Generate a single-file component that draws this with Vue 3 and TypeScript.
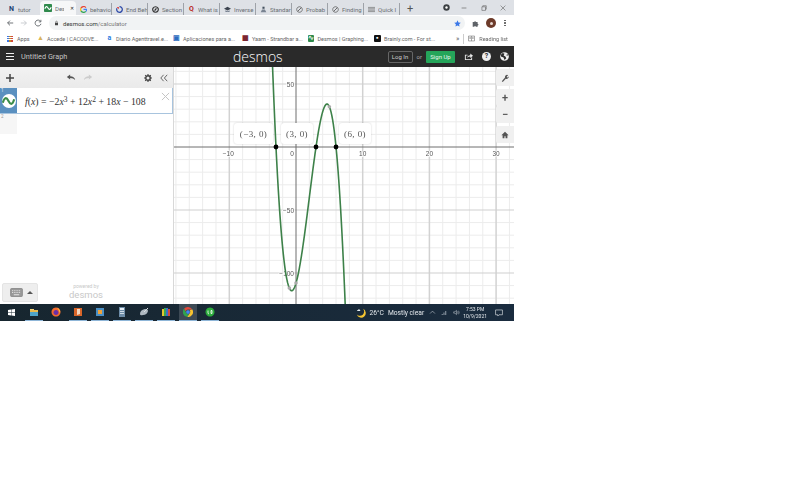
<script setup lang="ts">
type Shape = { d: string; fill?: string; stroke?: string; sw?: number }

const tabs: { title: string; active?: boolean; glyph?: string; color?: string; shapes?: Shape[] }[] = [
  { title: 'tutor', glyph: 'N', color: '#1d3f72' },
  { title: 'Des', active: true, shapes: [{ d: 'M1 0h8q1 0 1 1v8q0 1-1 1H1q-1 0-1-1V1q0-1 1-1z', fill: '#2f8a4c' }, { d: 'M1 6q2-5 4-1t4-1', stroke: '#fff', sw: 1.4 }] },
  { title: 'behavio', shapes: [
    { d: 'M8.5 2.2A4.4 4.4 0 0 0 1.4 3', stroke: '#e94335', sw: 1.7 },
    { d: 'M1.4 3a4.4 4.4 0 0 0 0 4', stroke: '#fbbc05', sw: 1.7 },
    { d: 'M1.4 7a4.4 4.4 0 0 0 7 .8', stroke: '#34a853', sw: 1.7 },
    { d: 'M8.4 7.8Q9.6 6.5 9.4 4.8H5', stroke: '#4285f4', sw: 1.7 }
  ] },
  { title: 'End Beh', shapes: [{ d: 'M5 1a4 4 0 1 1-3.6 2.3', stroke: '#2e4aa8', sw: 1.8 }, { d: 'M1 1.5l3 0 0 3z', fill: '#d33' }] },
  { title: 'Section', shapes: [{ d: 'M5 1a4 4 0 1 0 .01 0z', stroke: '#333', sw: 1.6 }, { d: 'M3 7l1.2-3L7 3 5.8 6z', fill: '#333' }] },
  { title: 'What is', glyph: 'Q', color: '#b92b27' },
  { title: 'Inverse', shapes: [{ d: 'M0 4l5-3 5 3-5 2.5z', fill: '#3d4450' }, { d: 'M2 6v2.5h6V6l-3 1.5z', fill: '#7a8492' }] },
  { title: 'Standar', shapes: [{ d: 'M3.5 1h3v3h-3z', fill: '#44505e' }, { d: 'M1 9l2-4h4l2 4z', fill: '#7a8492' }] },
  { title: 'Probab', shapes: [{ d: 'M5 1a4 4 0 1 0 .01 0z', stroke: '#555', sw: 1 }, { d: 'M2.5 7.5l5-5', stroke: '#555', sw: 1.2 }] },
  { title: 'Finding', shapes: [{ d: 'M5 1a4 4 0 1 0 .01 0z', stroke: '#555', sw: 1 }, { d: 'M2.5 7.5l5-5', stroke: '#555', sw: 1.2 }] },
  { title: 'Quick I', shapes: [{ d: 'M0 2h10M0 4h10M0 6h10M0 8h10', stroke: '#666', sw: 0.9 }] }
]

const bookmarks: { title: string; width: number; glyph?: string; color: string; bg?: string }[] = [
  { title: 'Accede | CACOOVE...', width: 69, glyph: '▲', color: '#d9b35a' },
  { title: 'Diario Agenttravel.e...', width: 67, glyph: 'a', color: '#2a7de1' },
  { title: 'Aplicaciones para a...', width: 69, glyph: '▣', color: '#2c6bc0' },
  { title: 'Yaam - Strandbar a...', width: 65.5, glyph: '▦', color: '#7b2530' },
  { title: 'Desmos | Graphing...', width: 66.5, glyph: '∿', color: '#fff', bg: '#2f8a4c' },
  { title: 'Brainly.com - For st...', width: 67, glyph: '▪', color: '#fff', bg: '#111' }
]

// graph scale read off the tick labels of the reference
const W = 340
const H = 237
const ox = 122
const oy = 80
const sx = 6.67
const sy = 1.26
const px = (x: number) => ox + x * sx
const py = (y: number) => oy - y * sy
const f = (x: number) => -2 * x ** 3 + 12 * x ** 2 + 18 * x - 108

const range = (a: number, b: number, step: number) => {
  const out: number[] = []
  for (let v = a; v <= b; v += step) out.push(v)
  return out
}

const minorX = range(-18, 32, 2).filter((v) => v % 10 !== 0).map(px)
const minorY = range(-130, 60, 10).filter((v) => v % 50 !== 0).map(py)
const majorX = [-10, 10, 20, 30].map(px)
const majorY = [-100, -50, 50].map(py)

const curve = range(-4, 7.6, 0.05)
  .map((x, i) => `${i ? 'L' : 'M'}${px(x).toFixed(2)} ${py(f(x)).toFixed(2)}`)
  .join('')

const xTicks = [-10, 10, 20, 30].map((v) => ({ v, x: px(v) }))
const yTicks = [50, -50, -100].map((v) => ({ v, y: py(v) }))
const roots = [-3, 3, 6].map(px)
const greys = [
  { x: px(5), y: py(f(5)) },
  { x: px(-1), y: py(f(-1)) },
  { x: px(0), y: py(f(0)) }
]
const pointLabels = [
  { text: '(−3, 0)', cls: 'p1' },
  { text: '(3, 0)', cls: 'p2' },
  { text: '(6, 0)', cls: 'p3' }
]

const taskIcons: { cls?: string; shapes: Shape[] }[] = [
  { shapes: [{ d: 'M1 3h8v2H1z', fill: '#e8b84b' }, { d: 'M1 5h8v4H1z', fill: '#4fa3c7' }, { d: 'M1 2h4v1H1z', fill: '#f3d27a' }] },
  { cls: 'bare', shapes: [{ d: 'M5 .5a4.5 4.5 0 1 0 .01 0z', fill: '#f26a2e' }, { d: 'M5 3a2.5 2.5 0 1 0 .01 0z', fill: '#6b2fa8' }, { d: 'M6 .5Q10 3 9 6 8 3 6 .5z', fill: '#ffc93c' }] },
  { shapes: [{ d: 'M1 1h8v8H1z', fill: '#d9662a' }, { d: 'M4 2h3v5l-3 1z', fill: '#f5d7c0' }] },
  { shapes: [{ d: 'M1 1h8v8H1z', fill: '#4b8fc4' }, { d: 'M3 3h4v4H3z', fill: '#f0a23a' }] },
  { shapes: [{ d: 'M2 0h6v10H2z', fill: '#6e8da8' }, { d: 'M3 1h4v2H3z', fill: '#e6eef5' }, { d: 'M3 4h4v1H3zM3 6h4v1H3z', fill: '#cfdbe6' }] },
  { shapes: [{ d: 'M1 7q0-4 5-5 3 0 3 2-1 4-5 4-3 1-3-1z', fill: '#aeb8c0' }, { d: 'M5 5L9 1', stroke: '#d8dde0', sw: 1 }] },
  { shapes: [{ d: 'M1 2h2v7H1z', fill: '#e6c42e' }, { d: 'M3 1h2v8H3z', fill: '#3aa655' }, { d: 'M5 1h2v8H5z', fill: '#3b6fc9' }, { d: 'M7 2h2v7H7z', fill: '#d0483f' }] },
  { cls: 'current', shapes: [
    { d: 'M5 0a5 5 0 0 1 4.4 2.6H5A2.5 2.5 0 0 0 2.6 4.2L1 1.8A5 5 0 0 1 5 0z', fill: '#e2483b' },
    { d: 'M1 1.8l2.2 3.9A2.5 2.5 0 0 0 6 7.4L4.4 10A5 5 0 0 1 1 1.8z', fill: '#31a24f' },
    { d: 'M9.4 2.6A5 5 0 0 1 4.4 10L6.7 6.2A2.5 2.5 0 0 0 6.6 3.1z', fill: '#f7c32f' },
    { d: 'M5 3.2a1.8 1.8 0 1 0 .01 0z', fill: '#4285f4' }
  ] },
  { shapes: [{ d: 'M5 .5a4.5 4.5 0 1 0 .01 0z', fill: '#2bab3b' }, { d: 'M3 3.5v2.4q0 1 1 1M6 3.5h1v3H6z', stroke: '#fff', sw: 0.8 }] }
]
</script>

<template>
  <div class="screen">
    <div class="tabstrip">
      <div v-for="tab in tabs" :key="tab.title" class="tab" :class="{ active: tab.active }">
        <span v-if="tab.glyph" class="tab-glyph" :style="{ color: tab.color }">{{ tab.glyph }}</span>
        <svg v-else class="favicon" viewBox="0 0 10 10">
          <path v-for="(s, i) in tab.shapes" :key="i" :d="s.d" :fill="s.fill || 'none'" :stroke="s.stroke" :stroke-width="s.sw" />
        </svg>
        <span class="tab-title">{{ tab.title }}</span>
        <span v-if="tab.active" class="tab-close">✕</span>
      </div>
      <span class="new-tab">+</span>
      <div class="window-controls">
        <svg class="record" viewBox="0 0 10 10">
          <circle cx="5" cy="5" r="4.6" fill="#3c4043" />
          <circle cx="5" cy="5" r="1.7" fill="#fff" />
        </svg>
        <svg class="win-btn" viewBox="0 0 10 10"><path d="M1 5h8" stroke="#555" /></svg>
        <svg class="win-btn" viewBox="0 0 10 10"><path d="M1.5 3h6v6h-6zM3 3V1.2h5.8V7H7.5" fill="none" stroke="#555" stroke-width=".9" /></svg>
        <svg class="win-btn" viewBox="0 0 10 10"><path d="M1 1l8 8M9 1l-8 8" stroke="#555" stroke-width=".9" /></svg>
      </div>
    </div>

    <div class="toolbar">
      <svg class="nav" viewBox="0 0 10 10"><path d="M9 5H2M5 2L2 5l3 3" fill="none" stroke="#5f6368" stroke-width="1.1" /></svg>
      <svg class="nav" viewBox="0 0 10 10"><path d="M1 5h7M5 2l3 3-3 3" fill="none" stroke="#c4c7cc" stroke-width="1.1" /></svg>
      <svg class="nav" viewBox="0 0 10 10"><path d="M8.2 3A3.7 3.7 0 1 0 8.7 6M8.6 1v2.6H6" fill="none" stroke="#5f6368" stroke-width="1.1" /></svg>
      <div class="omnibox">
        <svg class="lock" viewBox="0 0 10 10"><path d="M2 4.5h6V9.5H2z" fill="#444" /><path d="M3.3 4.5V3a1.7 1.7 0 0 1 3.4 0v1.5" fill="none" stroke="#444" /></svg>
        <span class="url"><b>desmos.com</b>/calculator</span>
        <svg class="star" viewBox="0 0 10 10"><path d="M5 .5l1.4 3 3.3.4-2.4 2.2.6 3.3L5 7.8 2.100 9.4l.6-3.300L.3 3.900l3.300-.4z" fill="#3b78e7" /></svg>
      </div>
      <svg class="puzzle" viewBox="0 0 10 10"><path d="M1 3h2.200a1.200 1.200 0 0 1 2.400 0H8v2.400a1.200 1.200 0 0 1 0 2.400V9.500H5.500a1.200 1.200 0 0 0-2.300 0H1z" fill="#5f6368" /></svg>
      <span class="avatar"><i></i></span>
      <span class="dots"><i></i><i></i><i></i></span>
    </div>

    <div class="bookmarks">
      <span class="apps-grid"><i v-for="n in 9" :key="n"></i></span>
      <span class="bm-apps">Apps</span>
      <div v-for="b in bookmarks" :key="b.title" class="bookmark" :style="{ width: b.width + 'px' }">
        <span class="bm-icon" :style="{ color: b.color, background: b.bg || 'transparent' }">{{ b.glyph }}</span>
        <span class="bm-title">{{ b.title }}</span>
      </div>
      <span class="bm-more">»</span>
      <span class="bm-sep"></span>
      <svg class="bm-read" viewBox="0 0 10 10"><path d="M.7 1.500h8.600v7H.7zM5 1.500v7M2 3.500h2M2 5h2M6 3.500h2M6 5h2" fill="none" stroke="#666" stroke-width=".8" /></svg>
      <span class="bm-reading">Reading list</span>
    </div>

    <header class="dcg-header">
      <div class="head-left">
        <span class="burger"><i></i><i></i><i></i></span>
        <span class="graph-title">Untitled Graph</span>
      </div>
      <div class="logo">desmos</div>
      <div class="head-right">
        <span class="login">Log In</span>
        <span class="or">or</span>
        <span class="signup">Sign Up</span>
        <svg class="head-icon share" viewBox="0 0 10 10"><path d="M1 3h3v1H2v4h6V6h1v3H1z" fill="#eee" /><path d="M3.500 6.500Q4 3.500 7 3.500V1.800L10 4.300 7 6.800V5Q5 5 3.500 6.500z" fill="#eee" /></svg>
        <span class="head-icon help">?</span>
        <svg class="head-icon globe" viewBox="0 0 10 10"><circle cx="5" cy="5" r="4.800" fill="#eee" /><path d="M3 1l2 1-1 2 2 1 1 2-2 2-1-3-3-1 0-2zM8 2l1 2-2 0z" fill="#2a2a2a" /></svg>
      </div>
    </header>

    <main class="calc">
      <aside class="panel">
        <div class="panel-bar">
          <svg class="add" viewBox="0 0 8 8"><path d="M4 0v8M0 4h8" stroke="#444" stroke-width="1.500" /></svg>
          <div class="history">
            <svg viewBox="0 0 12 8"><path d="M1 3.500L5 .5v2Q10 2.500 11 7 9 4.500 5 4.500v2z" fill="#555" /></svg>
            <svg viewBox="0 0 12 8"><path d="M11 3.500L7 .5v2Q2 2.500 1 7 3 4.500 7 4.500v2z" fill="#ccc" /></svg>
          </div>
          <svg class="gear" viewBox="0 0 10 10"><circle cx="5" cy="5" r="2.800" fill="none" stroke="#444" stroke-width="1.800" /><path d="M5 0v2M5 8v2M0 5h2M8 5h2M1.500 1.500l1.400 1.400M7.100 7.100l1.400 1.400M8.500 1.500L7.100 2.900M2.900 7.100L1.500 8.500" stroke="#444" stroke-width="1.400" /></svg>
          <svg class="collapse" viewBox="0 0 10 10"><path d="M4.500 1L1 5l3.500 4M9 1L5.500 5 9 9" fill="none" stroke="#555" stroke-width="1.100" /></svg>
        </div>
        <div class="expr">
          <div class="expr-tab">
            <span class="expr-num">1</span>
            <span class="swatch">
              <svg viewBox="0 0 16 12"><path d="M1 8Q4 -2 8 6T15 4" fill="none" stroke="#3b8c4a" stroke-width="2.600" /></svg>
            </span>
          </div>
          <div class="formula">
            <i>f</i>(<i>x</i>) = −2<i>x</i><sup>3</sup> + 12<i>x</i><sup>2</sup> + 18<i>x</i> − 108
          </div>
          <svg class="expr-x" viewBox="0 0 10 10"><path d="M1 1l8 8M9 1l-8 8" stroke="#c4c4c4" stroke-width="1.100" /></svg>
        </div>
        <div class="expr-next"><span>2</span></div>
        <div class="panel-foot">
          <div class="kbd">
            <svg viewBox="0 0 14 10"><rect x=".5" y=".5" width="13" height="9" rx="1" fill="#999" stroke="#888" /><path d="M2 3h10M2 5h10" stroke="#eee" stroke-dasharray="1 1" /><path d="M4 7.500h6" stroke="#eee" /></svg>
            <span class="caret"></span>
          </div>
          <div class="powered">
            <small>powered by</small>
            <span>desmos</span>
          </div>
        </div>
      </aside>

      <section class="graph">
        <svg class="plot" :viewBox="`0 0 ${W} ${H}`">
          <line v-for="x in minorX" :key="'mx' + x" :x1="x" :x2="x" y1="0" :y2="H" class="minor" />
          <line v-for="y in minorY" :key="'my' + y" x1="0" :x2="W" :y1="y" :y2="y" class="minor" />
          <line v-for="x in majorX" :key="'Mx' + x" :x1="x" :x2="x" y1="0" :y2="H" class="major" />
          <line v-for="y in majorY" :key="'My' + y" x1="0" :x2="W" :y1="y" :y2="y" class="major-h" />
          <line :x1="ox" :x2="ox" y1="0" :y2="H" class="axis" />
          <line x1="0" :x2="W" :y1="oy" :y2="oy" class="axis" />
          <text v-for="t in xTicks" :key="t.v" :x="t.x - (t.v < 0 ? 1 : 0)" :y="oy + 8.500" text-anchor="middle" class="tick">{{ String(t.v).replace('-', '−') }}</text>
          <text :x="ox - 4" :y="oy + 8.500" text-anchor="middle" class="tick">0</text>
          <text v-for="t in yTicks" :key="t.v" :x="ox - 2" :y="t.y + 2.500" text-anchor="end" class="tick">{{ String(t.v).replace('-', '−') }}</text>
          <path :d="curve" class="curve" />
          <circle v-for="g in greys" :key="g.x" :cx="g.x" :cy="g.y" r="1.800" class="grey" />
          <circle v-for="x in roots" :key="x" :cx="x" :cy="oy" r="2.400" fill="#000" />
        </svg>
        <div v-for="p in pointLabels" :key="p.text" class="point-label" :class="p.cls">{{ p.text }}</div>
        <div class="side-btns">
          <div class="side-btn wrench">
            <svg viewBox="0 0 10 10"><path d="M1 9l4-4.500Q4.500 2 6.500 1.200 8 .8 9 1.500L7.200 3 7.500 4l1 .3L9.800 2.800Q10 5 8 6 6.800 6.300 6 5.800L2.200 10z" fill="#555" /></svg>
          </div>
          <div class="zoom-group">
            <div class="side-btn">+</div>
            <div class="side-btn">−</div>
          </div>
          <div class="side-btn">
            <svg viewBox="0 0 10 10"><path d="M5 1L.5 5.200h1.500V9h2.300V6.500h1.400V9H8V5.200h1.500z" fill="#555" /></svg>
          </div>
        </div>
      </section>
    </main>

    <footer class="taskbar">
      <svg class="start" viewBox="0 0 10 10"><path d="M0 1.300L4.400.7v3.900H0zM5 .6L10 0v4.600H5zM0 5.200h4.400v4L0 8.700zM5 5.200h5V10l-5-.6z" fill="#fff" /></svg>
      <div class="task-icons">
        <div v-for="(t, i) in taskIcons" :key="i" class="task-icon" :class="t.cls">
          <svg viewBox="0 0 10 10"><path v-for="(s, j) in t.shapes" :key="j" :d="s.d" :fill="s.fill || 'none'" :stroke="s.stroke" :stroke-width="s.sw" /></svg>
        </div>
      </div>
      <div class="tray">
        <svg class="moon" viewBox="0 0 10 10"><path d="M7 .8A4.600 4.600 0 1 1 .8 6.500 4 4 0 0 0 7 .8z" fill="#f5c431" /><path d="M1 3q0-1 1-1 .5-1 1.500-.5Q5 2 4 3z" fill="#e8eef2" /></svg>
        <span class="temp">26°C</span>
        <span class="weather">Mostly clear</span>
        <svg class="tray-ico" viewBox="0 0 10 10"><path d="M1.500 6.500L5 3l3.500 3.500" fill="none" stroke="#cfd6dc" stroke-width=".8" /></svg>
        <svg class="tray-ico" viewBox="0 0 10 10"><path d="M1 8.500h1.500V7H1zM3.500 8.500H5V5H3.500zM6 8.500h1.500V3H6z" fill="#8d99a5" /></svg>
        <svg class="tray-ico" viewBox="0 0 10 10"><path d="M1 4h1.800L5 2v6L2.800 6H1zM6.500 3.500q1 1.500 0 3M8 2.500q1.500 2.500 0 5" fill="none" stroke="#cfd6dc" stroke-width=".7" /></svg>
        <div class="clock"><span>7:53 PM</span><span>10/9/2021</span></div>
        <svg class="notify" viewBox="0 0 10 10"><path d="M.7 1.200h8.600v6H5L3.500 8.800V7.200H.7z" fill="none" stroke="#dfe4e8" stroke-width=".8" /></svg>
      </div>
    </footer>
  </div>
</template>

<style>
html,
body {
  margin: 0;
  background: #fff;
}
</style>

<style scoped>
.screen {
  width: 514px;
  height: 321px;
  display: flex;
  flex-direction: column;
  overflow: hidden;
  font-family: Roboto, "Liberation Sans", sans-serif;
  filter: blur(0.5px);
}

/* chrome */
.tabstrip {
  height: 15px;
  flex: none;
  display: flex;
  align-items: flex-end;
  padding-left: 4px;
  background: #dee1e6;
}

.tab {
  width: 36px;
  height: 12px;
  box-sizing: border-box;
  padding-left: 4px;
  display: flex;
  align-items: center;
  gap: 3px;
  overflow: hidden;
  white-space: nowrap;
  border-right: 1px solid #9ea2a8;
  font-size: 6px;
  color: #6a6e73;
}

.tab:first-child,
.tab.active {
  border-right-color: transparent;
}

.tab.active {
  background: #f6f7f8;
  border-radius: 4px 4px 0 0;
  height: 14px;
}

.favicon {
  width: 7px;
  height: 7px;
  flex: none;
}

.tab.active .favicon {
  width: 8px;
  height: 8px;
}

.tab-glyph {
  width: 7px;
  flex: none;
  font-size: 7px;
  font-weight: 700;
  text-align: center;
}

.tab-title {
  overflow: hidden;
  flex: 1;
}

.tab.active .tab-title {
  flex: none;
  width: 9px;
}

.tab-close {
  margin-left: 3px;
  font-size: 5px;
  color: #222;
}

.new-tab {
  margin-left: 5px;
  width: 10px;
  height: 12px;
  text-align: center;
  font-size: 11px;
  line-height: 12px;
  color: #555;
}

.window-controls {
  margin-left: auto;
  height: 15px;
  display: flex;
  align-items: center;
}

.record {
  width: 7px;
  height: 7px;
  margin-right: 11px;
}

.win-btn {
  width: 6px;
  height: 6px;
  margin-right: 13.500px;
}

.win-btn:last-child {
  margin-right: 8px;
}

.toolbar {
  height: 16px;
  flex: none;
  display: flex;
  align-items: center;
  padding-left: 6px;
  background: #fff;
}

.nav {
  width: 8px;
  height: 8px;
  margin-right: 6px;
}

.omnibox {
  width: 416px;
  height: 14px;
  margin-left: 1px;
  box-sizing: border-box;
  padding: 0 4px 0 5px;
  display: flex;
  align-items: center;
  border-radius: 7px;
  background: #f1f3f4;
}

.lock {
  width: 5px;
  height: 6px;
}

.url {
  margin-left: 4px;
  font-size: 6px;
  color: #777;
}

.url b {
  font-weight: 400;
  color: #333;
}

.star {
  margin-left: auto;
  width: 7px;
  height: 7px;
}

.puzzle {
  width: 7px;
  height: 7px;
  margin-left: 7px;
}

.avatar {
  width: 10px;
  height: 10px;
  margin-left: 7px;
  border-radius: 50%;
  background: #6d3b2a;
  display: flex;
  align-items: center;
  justify-content: center;
}

.avatar i {
  width: 3px;
  height: 3px;
  border-radius: 50%;
  background: #e8d9d2;
}

.dots {
  margin-left: 8px;
  display: flex;
  flex-direction: column;
  gap: 1px;
}

.dots i {
  width: 1.500px;
  height: 1.500px;
  border-radius: 50%;
  background: #555;
}

.bookmarks {
  height: 15px;
  flex: none;
  display: flex;
  align-items: center;
  padding-left: 7px;
  font-size: 5.500px;
  color: #666;
  white-space: nowrap;
  background: #fff;
}

.apps-grid {
  width: 6px;
  height: 6px;
  display: grid;
  grid-template-columns: repeat(3, 1.500px);
  gap: 0.700px;
}

.apps-grid i {
  background: #c58a28;
}

.apps-grid i:nth-child(3n + 1) {
  background: #3b78e7;
}

.apps-grid i:nth-child(3n) {
  background: #d34a3c;
}

.bm-apps {
  margin-left: 4px;
  width: 20px;
}

.bookmark {
  display: flex;
  align-items: center;
  gap: 3.500px;
  flex: none;
  overflow: hidden;
}

.bm-icon {
  width: 6.500px;
  height: 7px;
  flex: none;
  border-radius: 1px;
  font-size: 7px;
  line-height: 7px;
  text-align: center;
  font-weight: 700;
}

.bm-more {
  margin-left: 15px;
  font-size: 7px;
}

.bm-sep {
  width: 1px;
  height: 10px;
  margin-left: 4px;
  background: #ccc;
}

.bm-read {
  width: 7px;
  height: 7px;
  margin-left: 4px;
}

.bm-reading {
  margin-left: 4px;
}

/* desmos header */
.dcg-header {
  height: 21px;
  flex: none;
  position: relative;
  display: flex;
  align-items: center;
  justify-content: space-between;
  background: #2a2a2a;
  color: #ddd;
}

.head-left {
  display: flex;
  align-items: center;
  padding-left: 6px;
}

.burger {
  width: 8px;
  display: flex;
  flex-direction: column;
  gap: 1.500px;
}

.burger i {
  height: 1.300px;
  background: #eee;
}

.graph-title {
  margin-left: 7px;
  font-size: 7.300px;
  color: #c4c4c4;
}

.logo {
  position: absolute;
  left: 233px;
  top: 0;
  font-family: "Open Sans", sans-serif;
  font-size: 14px;
  line-height: 21px;
  font-weight: 300;
  color: #fff;
}

.head-right {
  display: flex;
  align-items: center;
  padding-right: 5px;
}

.login {
  width: 25px;
  height: 12px;
  box-sizing: border-box;
  border: 1px solid #666;
  border-radius: 2px;
  font-size: 6px;
  line-height: 10px;
  text-align: center;
  color: #ccc;
}

.or {
  margin: 0 4px;
  font-size: 6px;
  color: #aaa;
}

.signup {
  width: 29px;
  height: 12px;
  border-radius: 1px;
  background: #25a55a;
  font-size: 6px;
  line-height: 12px;
  text-align: center;
  color: #e8f7ee;
}

.head-icon {
  width: 9px;
  height: 9px;
}

.share {
  margin-left: 9px;
}

.help {
  margin-left: 9px;
  border-radius: 50%;
  background: #eee;
  color: #2a2a2a;
  font-size: 7px;
  font-weight: 700;
  line-height: 9px;
  text-align: center;
}

.globe {
  margin-left: 9px;
}

/* calculator */
.calc {
  flex: 1;
  min-height: 0;
  display: flex;
}

.panel {
  width: 174px;
  flex: none;
  box-sizing: border-box;
  display: flex;
  flex-direction: column;
  border-right: 1px solid #d8d8d8;
  background: #fff;
  z-index: 1;
}

.panel-bar {
  height: 21px;
  flex: none;
  display: flex;
  align-items: center;
  background: linear-gradient(#f2f2f2, #eaeaea);
}

.add {
  width: 8px;
  height: 8px;
  margin-left: 6px;
}

.history {
  margin-left: 52px;
  display: flex;
  gap: 7px;
}

.history svg {
  width: 10px;
  height: 7px;
}

.gear {
  width: 8px;
  height: 8px;
  margin-left: 51px;
}

.collapse {
  width: 8px;
  height: 8px;
  margin-left: 8px;
}

.expr {
  height: 26px;
  flex: none;
  display: flex;
  position: relative;
  box-sizing: border-box;
  border-bottom: 1px solid #a8c4de;
  border-right: 1px solid #a8c4de;
}

.expr-tab {
  width: 17px;
  flex: none;
  position: relative;
  background: #5a90c0;
  display: flex;
  align-items: center;
  justify-content: center;
}

.expr-num {
  position: absolute;
  left: 1px;
  top: 0;
  font-size: 4.500px;
  line-height: 6px;
  color: #e8f0f8;
}

.swatch {
  width: 14px;
  height: 14px;
  border-radius: 50%;
  background: #fff;
  display: flex;
  align-items: center;
  justify-content: center;
}

.swatch svg {
  width: 13px;
  height: 10px;
}

.formula {
  margin: 2px 0 0 8px;
  align-self: center;
  font-family: "Liberation Serif", serif;
  font-size: 9.800px;
  color: #333;
  white-space: nowrap;
}

.formula sup {
  font-size: 7.500px;
  line-height: 0;
  vertical-align: 3.500px;
}

.expr-x {
  position: absolute;
  right: 2px;
  top: 4px;
  width: 9px;
  height: 9px;
}

.expr-next {
  width: 17px;
  height: 20px;
  flex: none;
  background: #f6f6f6;
  font-size: 4.500px;
  color: #999;
  padding-left: 1px;
  box-sizing: border-box;
}

.panel-foot {
  margin-top: auto;
  height: 21px;
  display: flex;
  align-items: flex-start;
  padding: 0 0 2px 2px;
  box-sizing: border-box;
}

.kbd {
  width: 36px;
  height: 19px;
  box-sizing: border-box;
  padding-left: 7px;
  display: flex;
  align-items: center;
  gap: 4px;
  border: 1px solid #e4e4e4;
  border-radius: 2px;
  background: #eee;
}

.kbd svg {
  width: 13px;
  height: 9px;
}

.caret {
  border-left: 3px solid transparent;
  border-right: 3px solid transparent;
  border-bottom: 3px solid #555;
}

.powered {
  margin-left: 31px;
  display: flex;
  flex-direction: column;
  align-items: center;
  color: #c8c8c8;
}

.powered small {
  font-size: 5px;
  line-height: 6px;
}

.powered span {
  font-size: 9.500px;
  line-height: 11px;
}

/* graph */
.graph {
  flex: 1;
  min-width: 0;
  position: relative;
  background: #fff;
}

.plot {
  display: block;
  width: 100%;
  height: 100%;
}

.minor {
  stroke: #ececec;
  stroke-width: 1;
}

.major {
  stroke: #d2d2d2;
  stroke-width: 1.500;
}

.major-h {
  stroke: #cfcfcf;
  stroke-width: 1;
}

.axis {
  stroke: #6f6f6f;
  stroke-width: 1;
}

.tick {
  font-family: "Liberation Sans", sans-serif;
  font-size: 6.500px;
  fill: #555;
  paint-order: stroke;
  stroke: #fff;
  stroke-width: 1.500px;
}

.curve {
  fill: none;
  stroke: #3d8149;
  stroke-width: 1.600;
}

.grey {
  fill: #aaa;
}

.point-label {
  position: absolute;
  top: 56px;
  height: 21px;
  box-sizing: border-box;
  display: flex;
  align-items: center;
  justify-content: center;
  border-radius: 3px;
  background: #fff;
  box-shadow: 0 0 2px rgba(0, 0, 0, 0.2);
  font-family: "Liberation Serif", serif;
  font-size: 9px;
  letter-spacing: 0.400px;
  color: #555;
}

.p1 {
  left: 60px;
  width: 39px;
}

.p2 {
  left: 107px;
  width: 32px;
}

.p3 {
  left: 165px;
  width: 32px;
}

.side-btns {
  position: absolute;
  right: 0;
  top: 2px;
  width: 18px;
  display: flex;
  flex-direction: column;
  gap: 3px;
}

.side-btn {
  height: 17px;
  display: flex;
  align-items: center;
  justify-content: center;
  border-radius: 2px 0 0 2px;
  background: #f0f0f0;
  font-size: 11px;
  font-weight: 600;
  color: #555;
}

.side-btn svg {
  width: 8px;
  height: 8px;
}

.zoom-group {
  display: flex;
  flex-direction: column;
}

/* taskbar */
.taskbar {
  height: 17px;
  flex: none;
  display: flex;
  align-items: center;
  background: linear-gradient(90deg, #17262f, #1a2c3f);
  color: #e4e8ec;
}

.start {
  width: 7px;
  height: 7px;
  margin-left: 8px;
}

.task-icons {
  margin-left: 8px;
  height: 17px;
  display: flex;
  gap: 4px;
  padding-left: 2px;
}

.task-icon {
  width: 18px;
  height: 17px;
  box-sizing: border-box;
  display: flex;
  align-items: center;
  justify-content: center;
  border-bottom: 1px solid #8fb6d8;
}

.task-icon.bare {
  border-bottom-color: transparent;
}

.task-icon svg {
  width: 10px;
  height: 10px;
}

.task-icon.current {
  background: #3d4a55;
}

.tray {
  margin-left: auto;
  display: flex;
  align-items: center;
  padding-right: 11px;
  font-size: 6.700px;
  white-space: nowrap;
}

.moon {
  width: 10px;
  height: 10px;
}

.temp {
  margin-left: 4px;
}

.weather {
  margin-left: 4px;
}

.tray-ico {
  width: 7px;
  height: 7px;
  margin-left: 5px;
}

.weather + .tray-ico {
  margin-left: 5px;
}

.clock {
  margin-left: 3px;
  display: flex;
  flex-direction: column;
  align-items: center;
  font-size: 5px;
  line-height: 7px;
}

.notify {
  width: 8px;
  height: 8px;
  margin-left: 8px;
}
</style>
